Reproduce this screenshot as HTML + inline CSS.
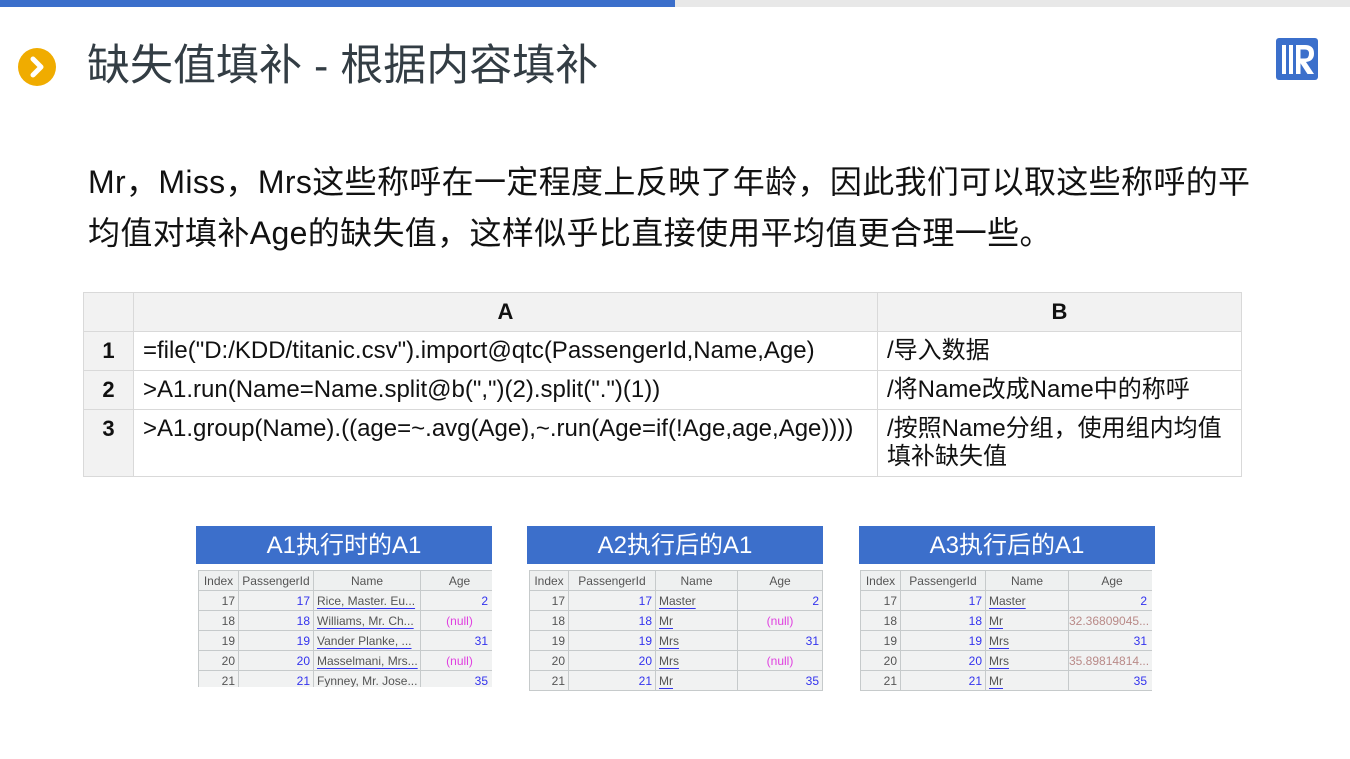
<!DOCTYPE html>
<html><head><meta charset="utf-8">
<style>
*{margin:0;padding:0;box-sizing:border-box}
body{width:1350px;height:759px;background:#fff;position:relative;overflow:hidden;font-family:"Liberation Sans","Noto Sans CJK SC",sans-serif}
.abs{position:absolute}
.title{left:87px;top:36px;font-size:43px;color:#333d44;white-space:nowrap;line-height:60px}
.para{left:88px;top:157px;font-size:32px;line-height:51px;color:#111;white-space:nowrap;letter-spacing:0.35px}
table.main{position:absolute;left:83px;top:292px;border-collapse:collapse;font-size:24px;color:#111;table-layout:fixed;width:1158px}
table.main td{border:1px solid #d9d9d9;padding:0 9px;vertical-align:top;white-space:nowrap}
table.main .h{background:#f2f2f2;font-weight:bold;text-align:center;vertical-align:middle;font-size:22px}
table.main .n{background:#f2f2f2;font-weight:bold;text-align:center;padding:0;font-size:22px}
.cap{background:#3c6fcb;color:#fff;font-size:24px;text-align:center;line-height:40px;height:38px}
table.s{position:absolute;border-collapse:collapse;font-size:12px;background:#f1f2f2;table-layout:fixed}
table.s td{border:1px solid #c6cacb;height:20px;padding:0 3px;color:#555;white-space:nowrap;overflow:hidden}
table.s tr:first-child td{text-align:center;color:#555;background:#eef0f0}
.r{text-align:right}.b{color:#3333ee!important;text-align:right}
.u{text-decoration:underline;text-decoration-color:#3333ee;text-underline-offset:3px;color:#555}
.nl{color:#e040e0!important;text-align:center}
.f{color:#b98a88!important;text-align:right}
</style></head><body>
<div class="abs" style="left:0;top:0;width:675px;height:7px;background:#3b6fcb"></div>
<div class="abs" style="left:675px;top:0;width:675px;height:7px;background:#e8e8e8"></div>
<div class="abs" style="left:18px;top:48px;width:38px;height:38px;border-radius:50%;background:#f0ac00"></div>
<svg class="abs" style="left:18px;top:48px" width="38" height="38"><path d="M15 11 L23 19 L15 27" stroke="#fff" stroke-width="5" fill="none" stroke-linecap="round" stroke-linejoin="round"/></svg>
<div class="abs title">缺失值填补 - 根据内容填补</div>
<svg class="abs" style="left:1276px;top:38px" width="42" height="42"><rect x="0" y="0" width="42" height="42" rx="3" fill="#3b6fcb"/><rect x="6" y="7" width="4" height="29" fill="#fff"/><rect x="13" y="7" width="4" height="29" fill="#fff"/><path d="M20 7 H29 Q38 7 38 15.5 Q38 23 30 24 L38 36 H31.5 L24 24.5 V20.5 H29 Q33 20.5 33 15.5 Q33 11.5 29 11.5 H24.5 V36 H20 Z" fill="#fff"/></svg>
<div class="abs para">Mr，Miss，Mrs这些称呼在一定程度上反映了年龄，因此我们可以取这些称呼的平<br>均值对填补Age的缺失值，这样似乎比直接使用平均值更合理一些。</div>
<table class="main">
<colgroup><col style="width:50px"><col style="width:744px"><col style="width:364px"></colgroup>
<tr style="height:39px"><td class="h"></td><td class="h">A</td><td class="h">B</td></tr>
<tr style="height:39px"><td class="n" style="line-height:37px">1</td><td style="line-height:37px">=file("D:/KDD/titanic.csv").import@qtc(PassengerId,Name,Age)</td><td style="line-height:37px">/导入数据</td></tr>
<tr style="height:39px"><td class="n" style="line-height:37px">2</td><td style="line-height:37px">&gt;A1.run(Name=Name.split@b(",")(2).split(".")(1))</td><td style="line-height:37px">/将Name改成Name中的称呼</td></tr>
<tr style="height:67px"><td class="n" style="line-height:37px">3</td><td style="line-height:37px">&gt;A1.group(Name).((age=~.avg(Age),~.run(Age=if(!Age,age,Age))))</td><td style="line-height:28px;padding-top:5px">/按照Name分组，使用组内均值<br>填补缺失值</td></tr>
</table>

<div class="abs cap" style="left:196px;top:526px;width:296px">A1执行时的A1</div>
<div class="abs cap" style="left:527px;top:526px;width:296px">A2执行后的A1</div>
<div class="abs cap" style="left:859px;top:526px;width:296px">A3执行后的A1</div>

<div class="abs" style="left:196px;top:569px;width:296px;height:118px;overflow:hidden">
<table class="s" style="left:2px;top:1px;width:300px">
<colgroup><col style="width:40px"><col style="width:75px"><col style="width:107px"><col style="width:78px"></colgroup>
<tr><td>Index</td><td>PassengerId</td><td>Name</td><td>Age</td></tr>
<tr><td class="r">17</td><td class="b">17</td><td><span class="u">Rice, Master. Eu...</span></td><td class="b" style="padding-right:10px">2</td></tr>
<tr><td class="r">18</td><td class="b">18</td><td><span class="u">Williams, Mr. Ch...</span></td><td class="nl">(null)</td></tr>
<tr><td class="r">19</td><td class="b">19</td><td><span class="u">Vander Planke, ...</span></td><td class="b" style="padding-right:10px">31</td></tr>
<tr><td class="r">20</td><td class="b">20</td><td><span class="u">Masselmani, Mrs...</span></td><td class="nl">(null)</td></tr>
<tr><td class="r">21</td><td class="b">21</td><td>Fynney, Mr. Jose...</td><td class="b" style="padding-right:10px">35</td></tr>
</table></div>

<div class="abs" style="left:527px;top:568px;width:296px;height:123px;overflow:hidden">
<table class="s" style="left:2px;top:2px;width:293px">
<colgroup><col style="width:39px"><col style="width:87px"><col style="width:82px"><col style="width:85px"></colgroup>
<tr><td>Index</td><td>PassengerId</td><td>Name</td><td>Age</td></tr>
<tr><td class="r">17</td><td class="b">17</td><td><span class="u">Master</span></td><td class="b">2</td></tr>
<tr><td class="r">18</td><td class="b">18</td><td><span class="u">Mr</span></td><td class="nl">(null)</td></tr>
<tr><td class="r">19</td><td class="b">19</td><td><span class="u">Mrs</span></td><td class="b">31</td></tr>
<tr><td class="r">20</td><td class="b">20</td><td><span class="u">Mrs</span></td><td class="nl">(null)</td></tr>
<tr><td class="r">21</td><td class="b">21</td><td><span class="u">Mr</span></td><td class="b">35</td></tr>
<tr><td></td><td></td><td></td><td></td></tr>
</table></div>

<div class="abs" style="left:859px;top:568px;width:293px;height:123px;overflow:hidden">
<table class="s" style="left:1px;top:2px;width:295px">
<colgroup><col style="width:40px"><col style="width:85px"><col style="width:83px"><col style="width:87px"></colgroup>
<tr><td>Index</td><td>PassengerId</td><td>Name</td><td>Age</td></tr>
<tr><td class="r">17</td><td class="b">17</td><td><span class="u">Master</span></td><td class="b" style="padding-right:8px">2</td></tr>
<tr><td class="r">18</td><td class="b">18</td><td><span class="u">Mr</span></td><td class="f" style="text-align:left;padding:0">32.36809045...</td></tr>
<tr><td class="r">19</td><td class="b">19</td><td><span class="u">Mrs</span></td><td class="b" style="padding-right:8px">31</td></tr>
<tr><td class="r">20</td><td class="b">20</td><td><span class="u">Mrs</span></td><td class="f" style="text-align:left;padding:0">35.89814814...</td></tr>
<tr><td class="r">21</td><td class="b">21</td><td><span class="u">Mr</span></td><td class="b" style="padding-right:8px">35</td></tr>
<tr><td></td><td></td><td></td><td></td></tr>
</table></div>
</body></html>
